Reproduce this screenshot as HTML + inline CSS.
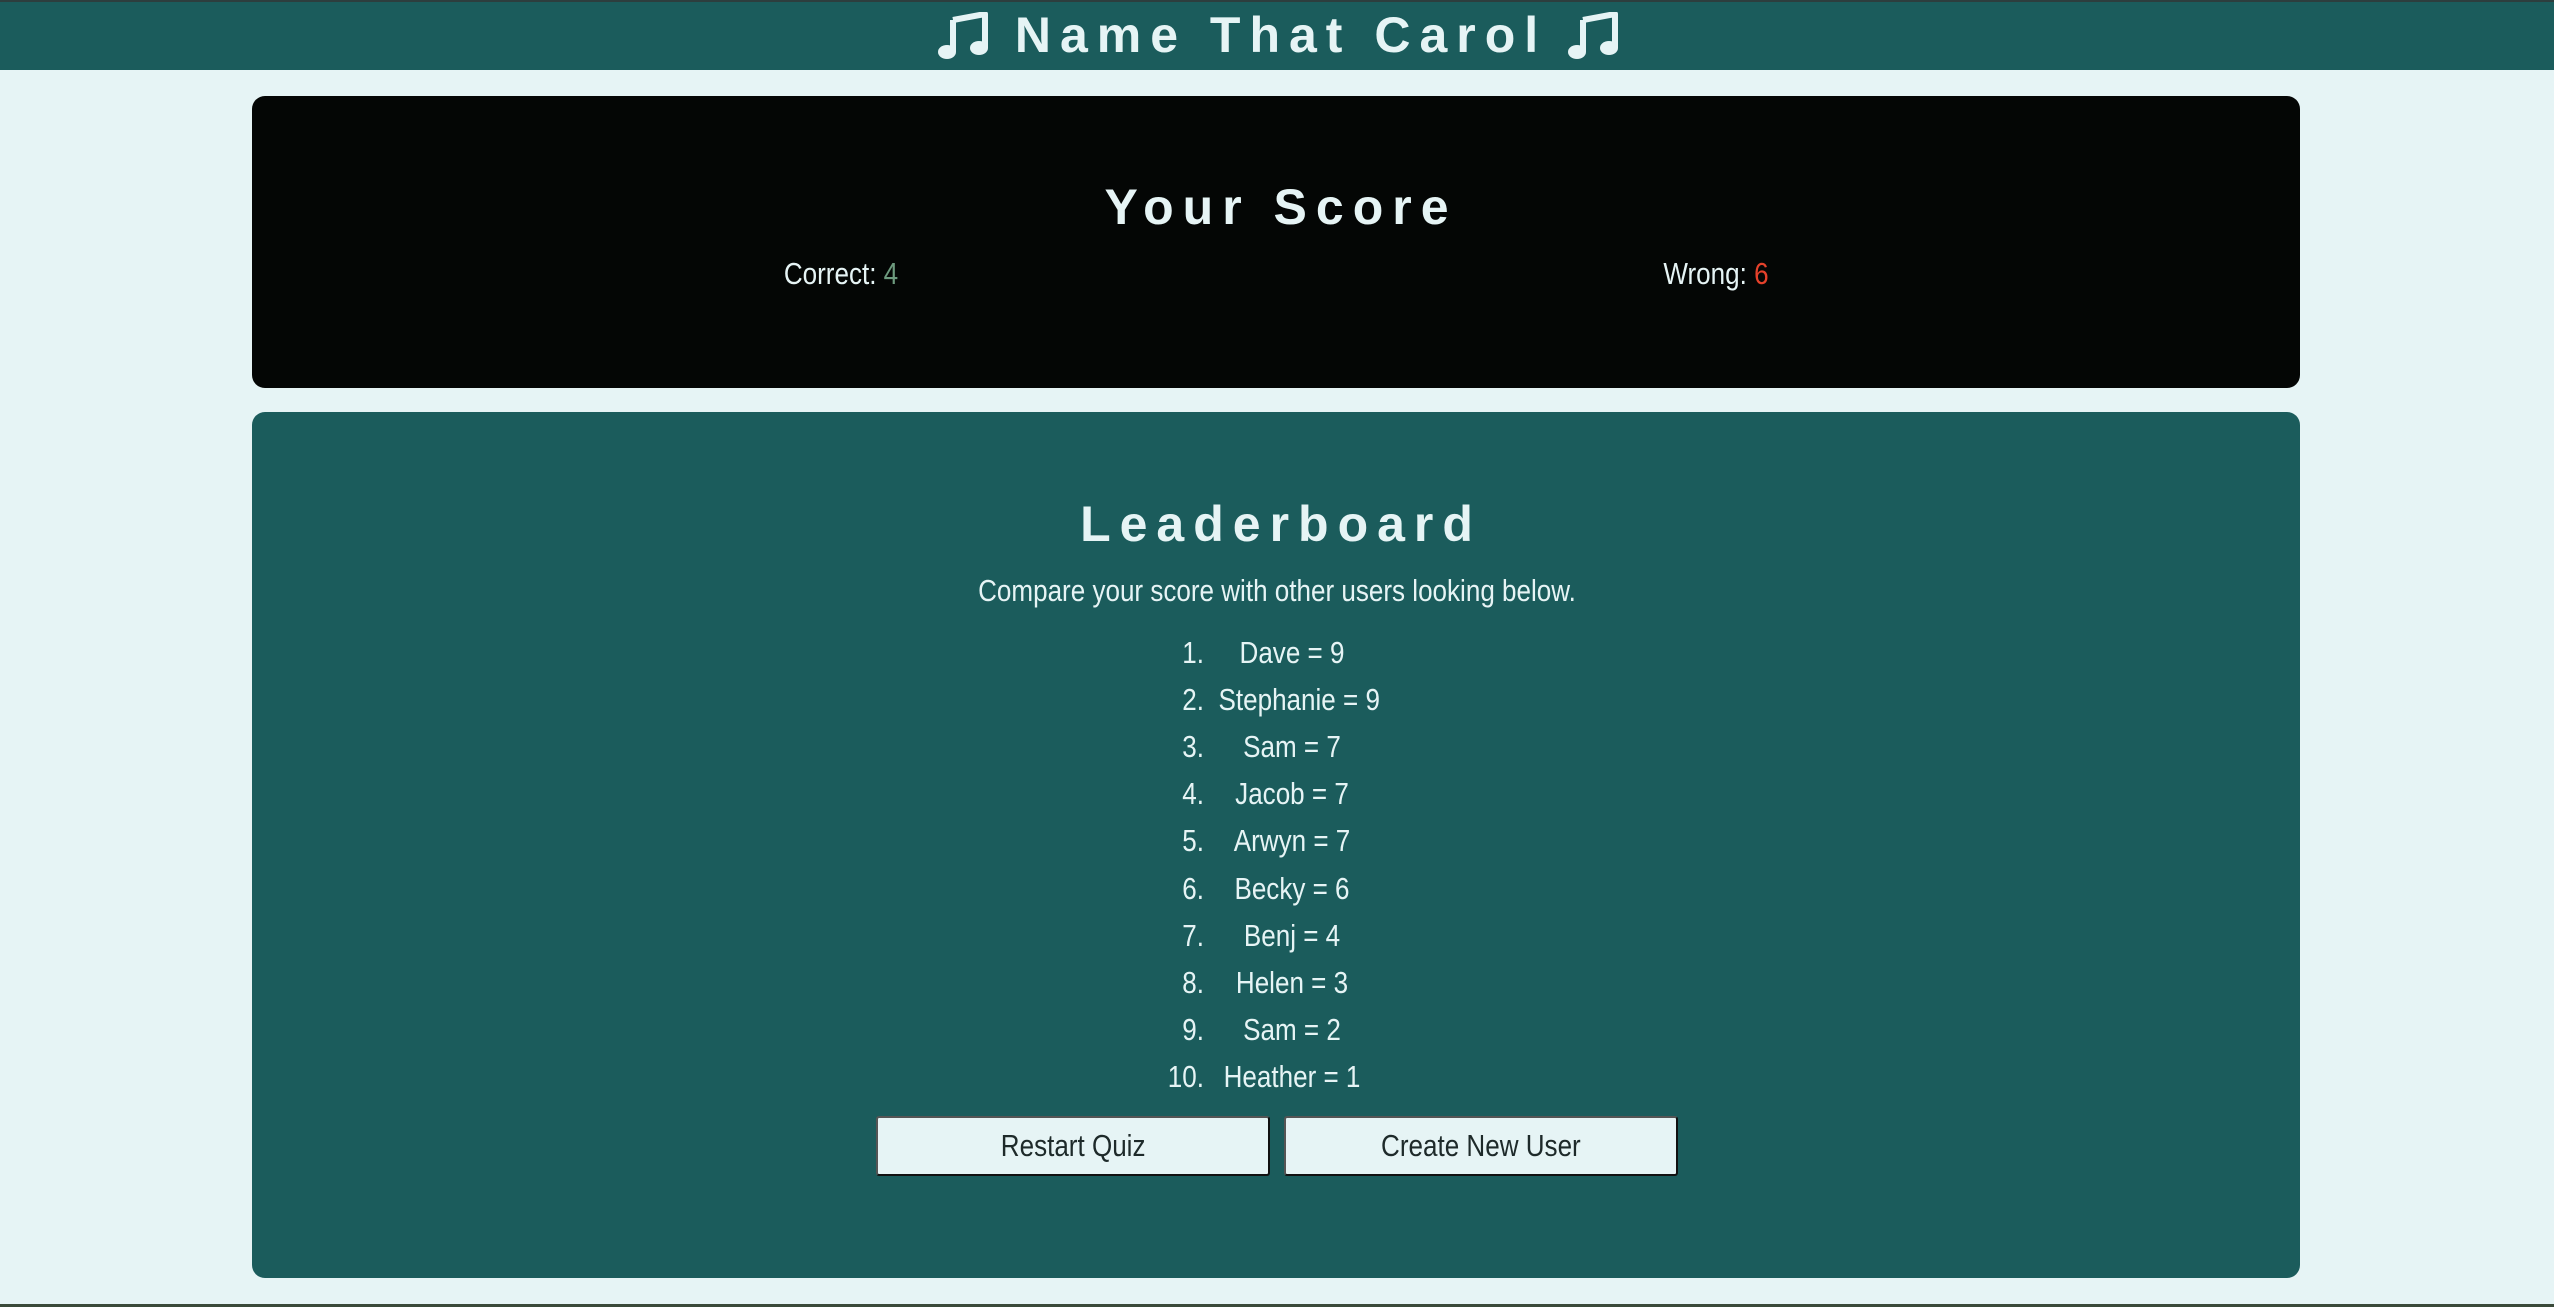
<!DOCTYPE html>
<html><head><meta charset="utf-8"><style>
*{margin:0;padding:0;box-sizing:border-box}
body{width:2554px;height:1307px;background:#e6f4f5;position:relative;overflow:hidden;font-family:"Liberation Sans",sans-serif;color:#e6f4f5}
.hdr{position:absolute;left:0;top:0;width:2554px;height:70px;background:#1b5c5c;border-top:2px solid #2d3e3e}
.t{position:absolute;white-space:nowrap;font-weight:bold;letter-spacing:9px;transform:translateX(-50%);left:1281px;font-size:50px;line-height:54px}
.box1{position:absolute;left:252px;top:96px;width:2048px;height:292px;background:#040605;border-radius:13px}
.box2{position:absolute;left:252px;top:412px;width:2048px;height:866px;background:#1b5c5c;border-radius:13px}
.n{position:absolute;white-space:nowrap;font-size:31px;transform:translateX(-50%) scaleX(0.84);line-height:1}
.num{position:absolute;white-space:nowrap;font-size:31px;line-height:1;transform-origin:right;transform:scaleX(0.84);text-align:right;width:60px}
.btn{position:absolute;top:1116px;width:394px;height:60px;background:#e6f4f5;border:2px solid #111;border-top-color:#555;border-left-color:#555;border-radius:3px;color:#1e2a2a;font-size:31px;text-align:center;line-height:56px}
.btn span{display:inline-block;transform:scaleX(0.84)}
.foot{position:absolute;left:0;top:1304px;width:2554px;height:3px;background:#3a4a3a}
svg{position:absolute}
</style></head><body>
<div class="hdr"></div>
<svg style="left:937px;top:12px" width="52" height="48" viewBox="0 0 52 48"><path d="M16 8 L48 2 V36" stroke="#e6f4f5" stroke-width="6" fill="none" stroke-linejoin="round"/><path d="M16 8 V40" stroke="#e6f4f5" stroke-width="6"/><ellipse cx="10" cy="40" rx="9" ry="7" fill="#e6f4f5"/><ellipse cx="42" cy="36" rx="9" ry="7" fill="#e6f4f5"/></svg>
<svg style="left:1567px;top:12px" width="52" height="48" viewBox="0 0 52 48"><path d="M16 8 L48 2 V36" stroke="#e6f4f5" stroke-width="6" fill="none" stroke-linejoin="round"/><path d="M16 8 V40" stroke="#e6f4f5" stroke-width="6"/><ellipse cx="10" cy="40" rx="9" ry="7" fill="#e6f4f5"/><ellipse cx="42" cy="36" rx="9" ry="7" fill="#e6f4f5"/></svg>
<div class="t" style="top:8px">Name That Carol</div>
<div class="box1"></div>
<div class="t" style="top:180px">Your Score</div>
<div class="n" style="left:841px;top:258px">Correct: <span style="color:#6d9a7e">4</span></div>
<div class="n" style="left:1716px;top:258px">Wrong: <span style="color:#e5412b">6</span></div>
<div class="box2"></div>
<div class="t" style="top:497px">Leaderboard</div>
<div class="n" style="left:1277px;top:575px">Compare your score with other users looking below.</div>
<div class="num" style="left:1144px;top:637px">1.</div><div class="n" style="left:1292px;top:637px">Dave = 9</div>
<div class="num" style="left:1144px;top:684px">2.</div><div class="n" style="left:1292px;top:684px">&nbsp;&nbsp;Stephanie = 9</div>
<div class="num" style="left:1144px;top:731px">3.</div><div class="n" style="left:1292px;top:731px">Sam = 7</div>
<div class="num" style="left:1144px;top:778px">4.</div><div class="n" style="left:1292px;top:778px">Jacob = 7</div>
<div class="num" style="left:1144px;top:825px">5.</div><div class="n" style="left:1292px;top:825px">Arwyn = 7</div>
<div class="num" style="left:1144px;top:873px">6.</div><div class="n" style="left:1292px;top:873px">Becky = 6</div>
<div class="num" style="left:1144px;top:920px">7.</div><div class="n" style="left:1292px;top:920px">Benj = 4</div>
<div class="num" style="left:1144px;top:967px">8.</div><div class="n" style="left:1292px;top:967px">Helen = 3</div>
<div class="num" style="left:1144px;top:1014px">9.</div><div class="n" style="left:1292px;top:1014px">Sam = 2</div>
<div class="num" style="left:1144px;top:1061px">10.</div><div class="n" style="left:1292px;top:1061px">Heather = 1</div>
<div class="btn" style="left:876px"><span>Restart Quiz</span></div>
<div class="btn" style="left:1284px"><span>Create New User</span></div>
<div class="foot"></div>
</body></html>
